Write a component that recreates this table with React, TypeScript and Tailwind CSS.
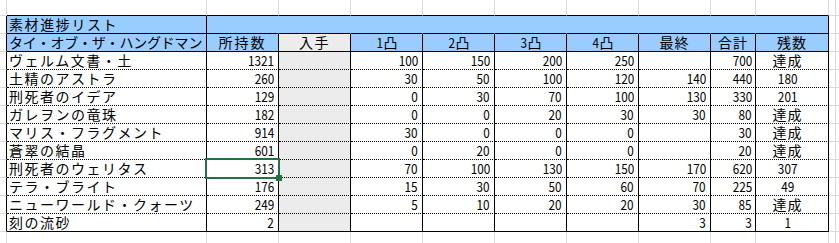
import React from "react";

type Row = { name: string; v: (string | number | null)[]; rest: string };

const rows: Row[] = [
  { name: "ヴェルム文書・土", v: [1321, 100, 150, 200, 250, null, 700], rest: "達成" },
  { name: "土精のアストラ", v: [260, 30, 50, 100, 120, 140, 440], rest: "180" },
  { name: "刑死者のイデア", v: [129, 0, 30, 70, 100, 130, 330], rest: "201" },
  { name: "ガレヲンの竜珠", v: [182, 0, 0, 20, 30, 30, 80], rest: "達成" },
  { name: "マリス・フラグメント", v: [914, 30, 0, 0, 0, null, 30], rest: "達成" },
  { name: "蒼翠の結晶", v: [601, 0, 20, 0, 0, null, 20], rest: "達成" },
  { name: "刑死者のウェリタス", v: [313, 70, 100, 130, 150, 170, 620], rest: "307" },
  { name: "テラ・ブライト", v: [176, 15, 30, 50, 60, 70, 225], rest: "49" },
  { name: "ニューワールド・クォーツ", v: [249, 5, 10, 20, 20, 30, 85], rest: "達成" },
  { name: "刻の流砂", v: [2, null, null, null, null, 3, 3], rest: "1" },
];

const base =
  "box-border border-r border-b whitespace-nowrap text-[14px] leading-[15px] pt-[1px] text-black";

function Num({ v }: { v: string | number | null }) {
  if (v === null) return null;
  return <span className="inline-block scale-x-[0.84] origin-right">{v}</span>;
}

function Gray({ noR, noB }: { noR?: boolean; noB?: boolean }) {
  return (
    <div
      className={
        "box-border " +
        (noR ? "" : "border-r border-r-[#dadada] ") +
        (noB ? "" : "border-b border-b-[#dadada]")
      }
    />
  );
}

export default function App() {
  const headerNums = ["1凸", "2凸", "3凸", "4凸"];
  return (
    <div className="w-[839px] h-[243px] bg-white overflow-hidden font-['Noto_Sans_CJK_JP','Noto_Sans',sans-serif]">
      <div className="grid grid-cols-[7px_200px_72px_72px_72px_72px_72px_72px_72px_45px_73px_7px_1fr] grid-rows-[16px_repeat(12,18px)_1fr] h-full">
        {/* top margin row */}
        <Gray />
        {Array.from({ length: 10 }).map((_, i) => (
          <div key={"t" + i} className="box-border border-r border-b border-r-[#dadada] border-b-black" />
        ))}
        <Gray />
        <Gray noR />

        {/* title row */}
        <div className="box-border border-r border-b border-r-black border-b-[#dadada]" />
        <div className={base + " bg-[#99ccff] border-r-black border-b-black pl-[2px] tracking-[1.6px]"}>
          素材進捗リスト
        </div>
        {Array.from({ length: 8 }).map((_, i) => (
          <div key={"b" + i} className={base + " bg-[#99ccff] border-r-[#99ccff] border-b-black"} />
        ))}
        <div className={base + " bg-[#99ccff] border-r-black border-b-black"} />
        <Gray />
        <Gray noR />

        {/* header row */}
        <div className="box-border border-r border-b border-r-black border-b-[#dadada]" />
        <div className={base + " bg-[#99ccff] border-r-black border-b-black pl-[2px] tracking-[-0.2px] text-[13.8px]"}>
          タイ・オブ・ザ・ハングドマン
        </div>
        <div className={base + " bg-[#99ccff] border-r-black border-b-black text-center tracking-[2px]"}>
          所持数
        </div>
        <div className={base + " bg-[#ececec] border-r-black border-b-black text-center tracking-[1.5px]"}>
          入手
        </div>
        {headerNums.map((h) => (
          <div key={h} className={base + " bg-[#99ccff] border-r-black border-b-black text-center"}>
            <span className="inline-block scale-x-[0.84]">{h.charAt(0)}</span>
            {h.charAt(1)}
          </div>
        ))}
        <div className={base + " bg-[#99ccff] border-r-black border-b-black text-center tracking-[1px]"}>
          最終
        </div>
        <div className={base + " bg-[#99ccff] border-r-black border-b-black text-center tracking-[1px]"}>
          合計
        </div>
        <div className={base + " bg-[#99ccff] border-r-black border-b-black text-center tracking-[1px]"}>
          残数
        </div>
        <Gray />
        <Gray noR />

        {/* data rows */}
        {rows.map((r, ri) => {
          const last = ri === rows.length - 1;
          const bottom = last ? " border-b-black" : " border-b-black [border-bottom-style:dotted]";
          const selected = ri === 6;
          return (
            <React.Fragment key={r.name}>
              <div className="box-border border-r border-b border-r-black border-b-[#dadada]" />
              <div className={base + " bg-white border-r-black pl-[2px] tracking-[1.5px]" + bottom}>
                {r.name}
              </div>
              <div className={base + " relative bg-white border-r-black text-right pr-[4px]" + bottom + (selected ? " z-10" : "")}>
                <Num v={r.v[0]} />
                {selected && (
                  <>
                    <div className="absolute -left-[2px] -top-[2px] w-[75px] h-[21px] border-2 border-[#217346]" />
                    <div className="absolute left-[69px] top-[15px] w-[6px] h-[6px] bg-[#217346]" />
                  </>
                )}
              </div>
              <div className={base + " bg-[#ececec] border-r-black" + bottom} />
              {r.v.slice(1, 6).map((v, i) => (
                <div key={i} className={base + " bg-white border-r-black text-right pr-[4px]" + bottom}>
                  <Num v={v} />
                </div>
              ))}
              <div className={base + " bg-white border-r-black text-right pr-[3px]" + bottom}>
                <Num v={r.v[6]} />
              </div>
              <div className={base + " bg-white border-r-black text-center pr-[9px]" + bottom}>
                {r.rest === "達成" ? (
                  <span className="tracking-[1px]">{r.rest}</span>
                ) : (
                  <span className="inline-block scale-x-[0.84]">{r.rest}</span>
                )}
              </div>
              <Gray />
              <Gray noR />
            </React.Fragment>
          );
        })}

        {/* bottom filler */}
        {Array.from({ length: 12 }).map((_, i) => (
          <Gray key={"f" + i} noB />
        ))}
        <Gray noR noB />
      </div>
    </div>
  );
}
